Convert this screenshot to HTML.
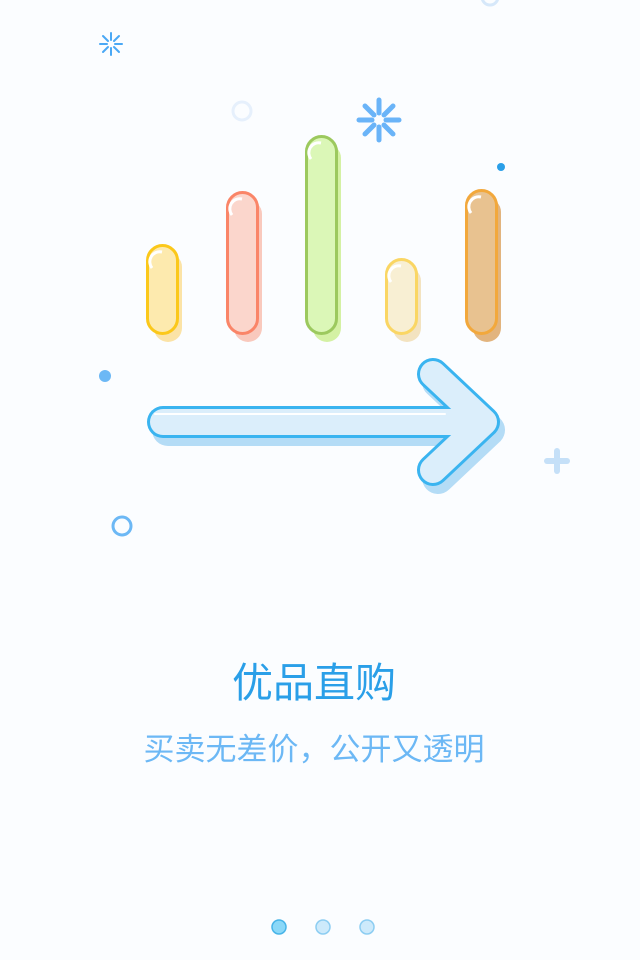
<!DOCTYPE html>
<html><head><meta charset="utf-8"><style>
html,body{margin:0;padding:0;background:#fbfdff;}
body{width:640px;height:960px;position:relative;overflow:hidden;font-family:"Liberation Sans","Noto Sans CJK SC",sans-serif;}
.t{position:absolute;left:-6px;width:640px;text-align:center;white-space:nowrap;}
</style></head><body>
<svg width="640" height="960" style="position:absolute;left:0;top:0">
<g stroke-linecap="round">
<g stroke="#4aa8f5" stroke-width="2" transform="translate(111,44)">
<line x1="0" y1="-4" x2="0" y2="-11"/><line x1="0" y1="4" x2="0" y2="11"/>
<line x1="-4" y1="0" x2="-11" y2="0"/><line x1="4" y1="0" x2="11" y2="0"/>
<line x1="3" y1="3" x2="8" y2="8"/><line x1="-3" y1="-3" x2="-8" y2="-8"/>
<line x1="3" y1="-3" x2="8" y2="-8"/><line x1="-3" y1="3" x2="-8" y2="8"/>
</g>
<g stroke="#6ab4f8" stroke-width="5" transform="translate(379,120)">
<line x1="0" y1="-7" x2="0" y2="-20"/><line x1="0" y1="7" x2="0" y2="20"/>
<line x1="-7" y1="0" x2="-20" y2="0"/><line x1="7" y1="0" x2="20" y2="0"/>
<line x1="5" y1="5" x2="14" y2="14"/><line x1="-5" y1="-5" x2="-14" y2="-14"/>
<line x1="5" y1="-5" x2="14" y2="-14"/><line x1="-5" y1="5" x2="-14" y2="14"/>
</g>
<g stroke="#c5e0f8" stroke-width="6"><line x1="547" y1="461" x2="567" y2="461"/><line x1="557" y1="451" x2="557" y2="471"/></g>
</g>
<circle cx="242" cy="111" r="9" fill="none" stroke="#e6f0fc" stroke-width="3"/>
<circle cx="490" cy="-3" r="8" fill="none" stroke="#d6e8fa" stroke-width="3"/>
<circle cx="501" cy="167" r="4" fill="#2a9fe8"/>
<circle cx="105" cy="376" r="6" fill="#6cb8f5"/>
<circle cx="122" cy="526" r="9" fill="none" stroke="#6cb8f5" stroke-width="3"/>

<g>
<rect x="154" y="253" width="28" height="89" rx="14" fill="#fbe3a6"/>
<rect x="147.5" y="245.5" width="30" height="88" rx="15" fill="#fdeaae" stroke="#fbc81a" stroke-width="3"/>
<path d="M152 268 a10 10 0 0 1 10 -16" stroke="#fff" stroke-width="3" fill="none"/>
<rect x="234" y="200" width="28" height="142" rx="14" fill="#f9c9bd"/>
<rect x="227.5" y="192.5" width="30" height="141" rx="15" fill="#fbd6cc" stroke="#fa8568" stroke-width="3"/>
<path d="M232 215 a10 10 0 0 1 10 -16" stroke="#fff" stroke-width="3" fill="none"/>
<rect x="313" y="144" width="28" height="198" rx="14" fill="#d4f1a4"/>
<rect x="306.5" y="136.5" width="30" height="197" rx="15" fill="#dbf7b7" stroke="#9cc95e" stroke-width="3"/>
<path d="M311 159 a10 10 0 0 1 10 -16" stroke="#fff" stroke-width="3" fill="none"/>
<rect x="393" y="267" width="28" height="75" rx="14" fill="#f3e3c0"/>
<rect x="386.5" y="259.5" width="30" height="74" rx="15" fill="#f8efd3" stroke="#fad664" stroke-width="3"/>
<path d="M391 282 a10 10 0 0 1 10 -16" stroke="#fff" stroke-width="3" fill="none"/>
<rect x="473" y="198" width="28" height="144" rx="14" fill="#e2b47e"/>
<rect x="466.5" y="190.5" width="30" height="143" rx="15" fill="#e8c290" stroke="#f2a83c" stroke-width="3"/>
<path d="M471 213 a10 10 0 0 1 10 -16" stroke="#fff" stroke-width="3" fill="none"/>
</g>

<g fill="none" stroke-linecap="round" stroke-linejoin="round">
<g stroke="#b4dcf6" stroke-width="32" transform="translate(5,8)">
<path d="M163 422 H482"/><path d="M433 374 L484 422 L433 470"/>
</g>
<g stroke="#3ab4f0" stroke-width="32">
<path d="M163 422 H482"/><path d="M433 374 L484 422 L433 470"/>
</g>
<g stroke="#dbeefb" stroke-width="26">
<path d="M163 422 H482"/><path d="M433 374 L484 422 L433 470"/>
</g>
<path d="M155 414 H445" stroke="#fff" stroke-width="2"/>
</g>

<circle cx="279" cy="927" r="7" fill="#8ad8f8" stroke="#47b4e8" stroke-width="1.5"/>
<circle cx="323" cy="927" r="7" fill="#cdeafb" stroke="#8ccdf2" stroke-width="1.5"/>
<circle cx="367" cy="927" r="7" fill="#cdeafb" stroke="#8ccdf2" stroke-width="1.5"/>
</svg>
<div class="t" style="top:656px;font-size:41px;color:#2a9fe8;line-height:54px;">优品直购</div>
<div class="t" style="top:729px;font-size:31px;color:#6cb8f5;line-height:42px;">买卖无差价，公开又透明</div>
</body></html>
